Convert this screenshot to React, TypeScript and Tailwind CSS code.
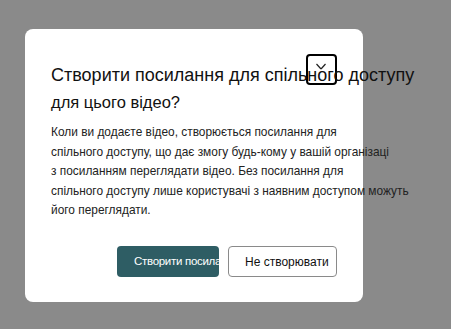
export default function App() {
  const body = [
    'Коли ви додаєте відео, створюється посилання для',
    'спільного доступу, що дає змогу будь-кому у вашій організаці',
    'з посиланням переглядати відео. Без посилання для',
    'спільного доступу лише користувачі з наявним доступом можуть',
    'його переглядати.',
  ];

  return (
    <div className="w-[451px] h-[329px] bg-[#8a8a8a] overflow-hidden font-['Liberation_Sans',Arial,sans-serif]">
      <div className="relative ml-[25px] mt-[29px] w-[338px] h-[273px] bg-white rounded-[8px] pl-[26px]">
        {/* close button with focus ring */}
        <div className="absolute top-[25px] right-[26px] w-[31px] h-[31px] border-2 border-black rounded-[4px]">
          <svg className="absolute left-[6px] top-[6px]" width="14" height="14" viewBox="0 0 14 14">
            <path d="M2.5 2 L7 7 M11.5 2 L7 7" stroke="#222" strokeWidth="1.2" fill="none" />
          </svg>
        </div>

        <div className="relative pt-[34px] text-[#111] whitespace-nowrap">
          <div className="text-[18px] leading-[24px]">Створити посилання для спільного доступу</div>
          <div className="mt-[3px] text-[16.5px] leading-[24px]">для цього відео?</div>
        </div>

        <div className="mt-[9px] text-[11.9px] leading-[19.6px] text-[#222] whitespace-nowrap">
          {body.map((line) => (
            <div key={line}>{line}</div>
          ))}
        </div>

        <div className="mt-[25px] ml-[66px] flex gap-[9px]">
          <button className="w-[102px] h-[31px] rounded-[4px] bg-[#2e5d64] text-white text-[11.5px] tracking-[-0.3px] text-left pl-[17px] overflow-hidden whitespace-nowrap">
            Створити посилання
          </button>
          <button className="w-[109px] h-[31px] rounded-[4px] border border-[#8a8a8a] bg-white text-[#111] text-[12px] text-left pl-[16px] pt-[2px] whitespace-nowrap">
            Не створювати
          </button>
        </div>
      </div>
    </div>
  );
}
